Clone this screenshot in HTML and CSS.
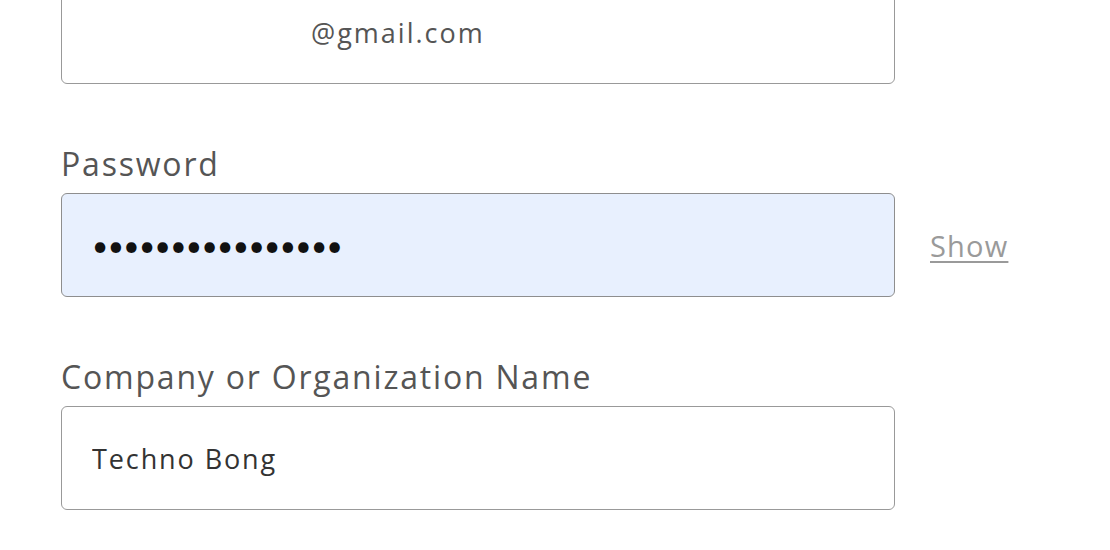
FILE: index.html
```html
<!DOCTYPE html>
<html lang="en">
<head>
<meta charset="utf-8">
<title>Sign up</title>
<link rel="stylesheet" href="styles.css">
</head>
<body>
<form class="form">
  <div class="field field-first">
    <div class="row">
      <input class="input input-email" type="text" value="@gmail.com" readonly>
    </div>
  </div>
  <div class="field">
    <label class="label" for="pw">Password</label>
    <div class="row">
      <input id="pw" class="input input-autofill" type="password" value="abcdefghijklmnop" readonly>
      <a class="show" href="#">Show</a>
    </div>
  </div>
  <div class="field">
    <label class="label" for="org">Company or Organization Name</label>
    <div class="row">
      <input id="org" class="input" type="text" value="Techno Bong" readonly>
    </div>
  </div>
</form>
</body>
</html>
```

FILE: styles.css
```css
html, body {
  margin: 0;
  padding: 0;
  background: #ffffff;
}
body {
  font-family: "Open Sans", Lato, Arial, sans-serif;
  overflow: hidden;
}
.form {
  display: flex;
  flex-direction: column;
  padding-left: 61px;
  margin-top: -20px;
}
.field {
  display: flex;
  flex-direction: column;
  margin-top: 61px;
}
.field-first {
  margin-top: 0;
}
.label {
  font-size: 32px;
  line-height: 38px;
  height: 38px;
  color: #555555;
  margin-bottom: 10px;
  letter-spacing: 1.8px;
}
.row {
  display: flex;
  align-items: center;
}
.input {
  box-sizing: border-box;
  width: 834px;
  height: 104px;
  border: 1px solid #999999;
  border-radius: 6px;
  background: #ffffff;
  padding: 0 0 0 30px;
  font-family: "Open Sans", Lato, Arial, sans-serif;
  font-size: 27px;
  color: #333333;
  letter-spacing: 1.9px;
  outline: none;
}
.input-email {
  padding-left: 249px;
  color: #555555;
  letter-spacing: 2px;
}
.input-autofill {
  background: #e8f0fe;
  border-color: #8e8e8e;
  color: #111111;
  font-family: Lato, Arial, sans-serif;
  font-size: 28px;
  letter-spacing: -0.6px;
}
.show {
  margin-left: 35px;
  font-size: 29px;
  color: #9a9a9a;
  text-decoration: underline;
  text-underline-offset: 4px;
  letter-spacing: 1.2px;
}
```
